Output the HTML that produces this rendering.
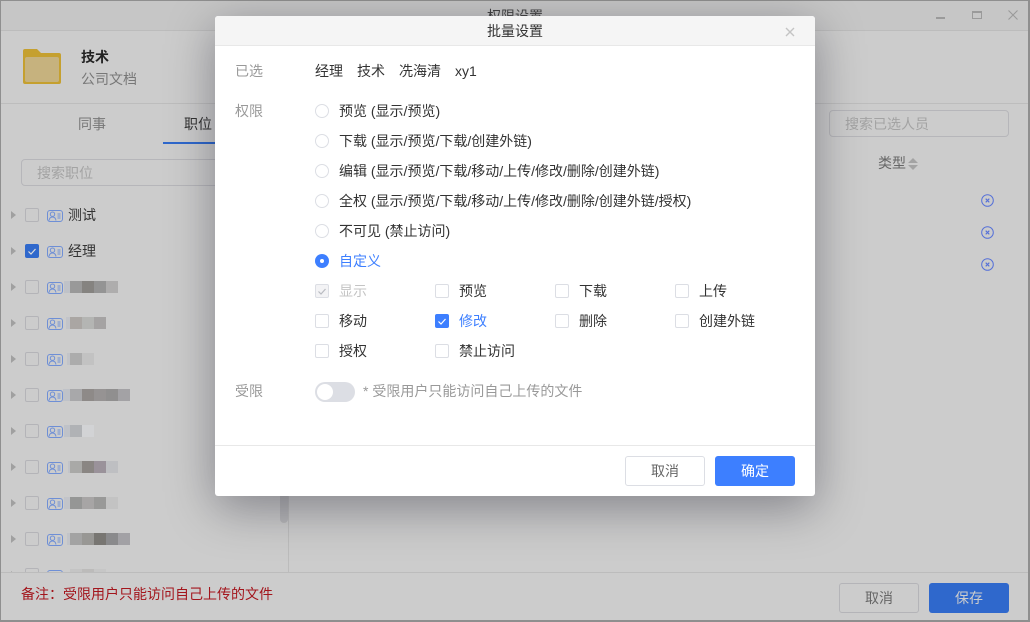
<!DOCTYPE html>
<html lang="zh"><head><meta charset="utf-8"><title>批量设置</title>
<style>
*{box-sizing:border-box}
html,body{margin:0;padding:0;width:1030px;height:622px;overflow:hidden;background:#ccc}
body{position:relative;font:14px/20px "Liberation Sans","Noto Sans CJK SC",sans-serif;color:#333}
.a{position:absolute}
.t{position:absolute;white-space:nowrap;line-height:20px}
.cb{position:absolute;width:14px;height:14px;border:1px solid #b4b4b8;border-radius:2px}
.cb2{position:absolute;width:14px;height:14px;border:1px solid #dcdee4;border-radius:2px;background:#fff}
.tri{position:absolute;left:11px;width:0;height:0;border-left:5px solid #a0a0a0;border-top:4px solid transparent;border-bottom:4px solid transparent}
.card{position:absolute;left:47px;width:16px;height:12px}
.p{position:absolute;height:12px}
.r{position:absolute;left:315px;width:14px;height:14px;border:1px solid #dcdee4;border-radius:50%;background:#fff}
.x{position:absolute;left:981px;width:13px;height:13px}
</style></head>
<body>
<!-- window background -->
<div class="a" style="left:0;top:0;width:1030px;height:31px;background:#c6c6c6;border-bottom:1px solid #bcbcbc"></div>
<div class="t" style="left:487px;top:6px;width:56px;text-align:center;color:#444">权限设置</div>
<div class="a" style="left:0;top:103px;width:1030px;height:1px;background:#bdbdbd"></div>
<svg class="a" style="left:22px;top:48px" width="40" height="38" viewBox="0 0 40 38">
<path d="M1 3a2 2 0 0 1 2-2h12l4 4h18a2 2 0 0 1 2 2v27a2 2 0 0 1-2 2H3a2 2 0 0 1-2-2z" fill="#c5a02f"/>
<rect x="3" y="9" width="34" height="25" rx="2" fill="#c6b27e"/>
</svg>
<div class="t" style="left:81px;top:47px;color:#222;font-weight:bold">技术</div>
<div class="t" style="left:81px;top:69px;color:#777">公司文档</div>
<div class="t" style="left:78px;top:114px;color:#777">同事</div>
<div class="t" style="left:184px;top:114px;color:#333">职位</div>
<div class="a" style="left:163px;top:142px;width:60px;height:2px;background:#2f68cc"></div>
<div class="a" style="left:21px;top:159px;width:220px;height:27px;border:1px solid #b6b6ba;border-radius:4px"></div>
<div class="t" style="left:37px;top:163px;color:#a3a3a3">搜索职位</div>

<!-- list -->
<div class="tri" style="top:211px"></div><div class="cb" style="left:25px;top:208px"></div>
<svg class="card" style="top:210px" viewBox="0 0 16 12"><rect x=".5" y=".5" width="15" height="11" rx="2.500" fill="none" stroke="#6e8fd6"/><circle cx="5.500" cy="4.200" r="2.200" fill="none" stroke="#6e8fd6"/><path d="M2 10.500c.4-2.500 1.800-3.500 3.500-3.500s3.100 1 3.500 3.500M10.500 4h3M10.500 6h3M10.500 8h3" fill="none" stroke="#6e8fd6"/></svg>
<div class="t" style="left:68px;top:205px;color:#333">测试</div>

<div class="tri" style="top:247px"></div>
<div class="a" style="left:25px;top:244px;width:14px;height:14px;background:#2f68cc;border-radius:2px"></div>
<svg class="a" style="left:25px;top:244px" width="14" height="14"><path d="M3.500 7.500l2.500 2.500 4.500-5" fill="none" stroke="#ddd" stroke-width="1.200"/></svg>
<svg class="card" style="top:246px" viewBox="0 0 16 12"><rect x=".5" y=".5" width="15" height="11" rx="2.500" fill="none" stroke="#6e8fd6"/><circle cx="5.500" cy="4.200" r="2.200" fill="none" stroke="#6e8fd6"/><path d="M2 10.500c.4-2.500 1.800-3.500 3.500-3.500s3.100 1 3.500 3.500M10.500 4h3M10.500 6h3M10.500 8h3" fill="none" stroke="#6e8fd6"/></svg>
<div class="t" style="left:68px;top:241px;color:#333">经理</div>

<div class="tri" style="top:283px"></div><div class="cb" style="left:25px;top:280px"></div>
<svg class="card" style="top:282px" viewBox="0 0 16 12"><rect x=".5" y=".5" width="15" height="11" rx="2.500" fill="none" stroke="#6e8fd6"/><circle cx="5.500" cy="4.200" r="2.200" fill="none" stroke="#6e8fd6"/><path d="M2 10.500c.4-2.500 1.800-3.500 3.500-3.500s3.100 1 3.500 3.500M10.500 4h3M10.500 6h3M10.500 8h3" fill="none" stroke="#6e8fd6"/></svg>
<div class="p" style="left:64px;top:281px;width:6px;background:#bfc2c8"></div><div class="p" style="left:70px;top:281px;width:12px;background:#999"></div><div class="p" style="left:82px;top:281px;width:12px;background:#858380"></div><div class="p" style="left:94px;top:281px;width:12px;background:#949494"></div><div class="p" style="left:106px;top:281px;width:12px;background:#aeadad"></div>

<div class="tri" style="top:319px"></div><div class="cb" style="left:25px;top:316px"></div>
<svg class="card" style="top:318px" viewBox="0 0 16 12"><rect x=".5" y=".5" width="15" height="11" rx="2.500" fill="none" stroke="#6e8fd6"/><circle cx="5.500" cy="4.200" r="2.200" fill="none" stroke="#6e8fd6"/><path d="M2 10.500c.4-2.500 1.800-3.500 3.500-3.500s3.100 1 3.500 3.500M10.500 4h3M10.500 6h3M10.500 8h3" fill="none" stroke="#6e8fd6"/></svg>
<div class="p" style="left:66px;top:317px;width:4px;background:#c2c4c9"></div><div class="p" style="left:70px;top:317px;width:12px;background:#aaa6a3"></div><div class="p" style="left:82px;top:317px;width:12px;background:#b4b5b3"></div><div class="p" style="left:94px;top:317px;width:12px;background:#a5a3a3"></div>

<div class="tri" style="top:355px"></div><div class="cb" style="left:25px;top:352px"></div>
<svg class="card" style="top:354px" viewBox="0 0 16 12"><rect x=".5" y=".5" width="15" height="11" rx="2.500" fill="none" stroke="#6e8fd6"/><circle cx="5.500" cy="4.200" r="2.200" fill="none" stroke="#6e8fd6"/><path d="M2 10.500c.4-2.500 1.800-3.500 3.500-3.500s3.100 1 3.500 3.500M10.500 4h3M10.500 6h3M10.500 8h3" fill="none" stroke="#6e8fd6"/></svg>
<div class="p" style="left:67px;top:353px;width:3px;background:#c2c4c9"></div><div class="p" style="left:70px;top:353px;width:12px;background:#acacac"></div><div class="p" style="left:82px;top:353px;width:12px;background:#c2c2c2"></div>

<div class="tri" style="top:391px"></div><div class="cb" style="left:25px;top:388px"></div>
<svg class="card" style="top:390px" viewBox="0 0 16 12"><rect x=".5" y=".5" width="15" height="11" rx="2.500" fill="none" stroke="#6e8fd6"/><circle cx="5.500" cy="4.200" r="2.200" fill="none" stroke="#6e8fd6"/><path d="M2 10.500c.4-2.500 1.800-3.500 3.500-3.500s3.100 1 3.500 3.500M10.500 4h3M10.500 6h3M10.500 8h3" fill="none" stroke="#6e8fd6"/></svg>
<div class="p" style="left:63px;top:389px;width:7px;background:#bfc2c8"></div><div class="p" style="left:70px;top:389px;width:12px;background:#a8a8aa"></div><div class="p" style="left:82px;top:389px;width:12px;background:#8e8a88"></div><div class="p" style="left:94px;top:389px;width:12px;background:#969393"></div><div class="p" style="left:106px;top:389px;width:12px;background:#908f8f"></div><div class="p" style="left:118px;top:389px;width:12px;background:#a3a2a5"></div>

<div class="tri" style="top:427px"></div><div class="cb" style="left:25px;top:424px"></div>
<svg class="card" style="top:426px" viewBox="0 0 16 12"><rect x=".5" y=".5" width="15" height="11" rx="2.500" fill="none" stroke="#6e8fd6"/><circle cx="5.500" cy="4.200" r="2.200" fill="none" stroke="#6e8fd6"/><path d="M2 10.500c.4-2.500 1.800-3.500 3.500-3.500s3.100 1 3.500 3.500M10.500 4h3M10.500 6h3M10.500 8h3" fill="none" stroke="#6e8fd6"/></svg>
<div class="p" style="left:64px;top:425px;width:6px;background:#bfc2c8"></div><div class="p" style="left:70px;top:425px;width:12px;background:#b0b2b5"></div><div class="p" style="left:82px;top:425px;width:12px;background:#d2d3d5"></div>

<div class="tri" style="top:463px"></div><div class="cb" style="left:25px;top:460px"></div>
<svg class="card" style="top:462px" viewBox="0 0 16 12"><rect x=".5" y=".5" width="15" height="11" rx="2.500" fill="none" stroke="#6e8fd6"/><circle cx="5.500" cy="4.200" r="2.200" fill="none" stroke="#6e8fd6"/><path d="M2 10.500c.4-2.500 1.800-3.500 3.500-3.500s3.100 1 3.500 3.500M10.500 4h3M10.500 6h3M10.500 8h3" fill="none" stroke="#6e8fd6"/></svg>
<div class="p" style="left:68px;top:461px;width:2px;background:#c2c4c9"></div><div class="p" style="left:70px;top:461px;width:12px;background:#a9a9a7"></div><div class="p" style="left:82px;top:461px;width:12px;background:#8a8683"></div><div class="p" style="left:94px;top:461px;width:12px;background:#9a929a"></div><div class="p" style="left:106px;top:461px;width:12px;background:#bebfc2"></div>

<div class="tri" style="top:499px"></div><div class="cb" style="left:25px;top:496px"></div>
<svg class="card" style="top:498px" viewBox="0 0 16 12"><rect x=".5" y=".5" width="15" height="11" rx="2.500" fill="none" stroke="#6e8fd6"/><circle cx="5.500" cy="4.200" r="2.200" fill="none" stroke="#6e8fd6"/><path d="M2 10.500c.4-2.500 1.800-3.500 3.500-3.500s3.100 1 3.500 3.500M10.500 4h3M10.500 6h3M10.500 8h3" fill="none" stroke="#6e8fd6"/></svg>
<div class="p" style="left:64px;top:497px;width:6px;background:#c2c4c9"></div><div class="p" style="left:70px;top:497px;width:12px;background:#959695"></div><div class="p" style="left:82px;top:497px;width:12px;background:#a7a5a5"></div><div class="p" style="left:94px;top:497px;width:12px;background:#999998"></div><div class="p" style="left:106px;top:497px;width:12px;background:#c3c3c3"></div>

<div class="tri" style="top:535px"></div><div class="cb" style="left:25px;top:532px"></div>
<svg class="card" style="top:534px" viewBox="0 0 16 12"><rect x=".5" y=".5" width="15" height="11" rx="2.500" fill="none" stroke="#6e8fd6"/><circle cx="5.500" cy="4.200" r="2.200" fill="none" stroke="#6e8fd6"/><path d="M2 10.500c.4-2.500 1.800-3.500 3.500-3.500s3.100 1 3.500 3.500M10.500 4h3M10.500 6h3M10.500 8h3" fill="none" stroke="#6e8fd6"/></svg>
<div class="p" style="left:67px;top:533px;width:3px;background:#c2c4c9"></div><div class="p" style="left:70px;top:533px;width:12px;background:#a3a3a3"></div><div class="p" style="left:82px;top:533px;width:12px;background:#989794"></div><div class="p" style="left:94px;top:533px;width:12px;background:#787672"></div><div class="p" style="left:106px;top:533px;width:12px;background:#8a8a8c"></div><div class="p" style="left:118px;top:533px;width:12px;background:#a2a1a5"></div>

<div class="tri" style="top:571px"></div><div class="cb" style="left:25px;top:568px"></div>
<svg class="card" style="top:570px" viewBox="0 0 16 12"><rect x=".5" y=".5" width="15" height="11" rx="2.500" fill="none" stroke="#6e8fd6"/></svg>
<div class="p" style="left:70px;top:569px;width:12px;background:#c4c4c4"></div><div class="p" style="left:82px;top:569px;width:12px;background:#bcbbba"></div><div class="p" style="left:94px;top:569px;width:12px;background:#c6c6c6"></div>

<!-- scroll and divider -->
<div class="a" style="left:280px;top:440px;width:8px;height:83px;background:#b8b8ba;border-radius:0 0 4px 4px"></div>
<div class="a" style="left:288px;top:104px;width:1px;height:468px;background:#bcbcbc"></div>

<!-- right side -->
<div class="a" style="left:829px;top:110px;width:180px;height:27px;border:1px solid #b6b6ba;border-radius:4px"></div>
<div class="t" style="left:845px;top:114px;color:#a3a3a3">搜索已选人员</div>
<div class="t" style="left:878px;top:153px;color:#666">类型</div>
<div class="a" style="left:908px;top:158px;width:0;height:0;border-left:5px solid transparent;border-right:5px solid transparent;border-bottom:5px solid #a3a3a3"></div>
<div class="a" style="left:908px;top:165px;width:0;height:0;border-left:5px solid transparent;border-right:5px solid transparent;border-top:5px solid #a3a3a3"></div>
<svg class="x" style="top:194px" viewBox="0 0 13 13"><circle cx="6.500" cy="6.500" r="5.800" fill="none" stroke="#5570d8"/><path d="M4.700 4.700l3.600 3.600M8.300 4.700l-3.600 3.600" stroke="#5570d8" stroke-width="1.100"/></svg>
<svg class="x" style="top:226px" viewBox="0 0 13 13"><circle cx="6.500" cy="6.500" r="5.800" fill="none" stroke="#5570d8"/><path d="M4.700 4.700l3.600 3.600M8.300 4.700l-3.600 3.600" stroke="#5570d8" stroke-width="1.100"/></svg>
<svg class="x" style="top:258px" viewBox="0 0 13 13"><circle cx="6.500" cy="6.500" r="5.800" fill="none" stroke="#5570d8"/><path d="M4.700 4.700l3.600 3.600M8.300 4.700l-3.600 3.600" stroke="#5570d8" stroke-width="1.100"/></svg>

<!-- window controls -->
<div class="a" style="left:936px;top:17px;width:9px;height:2px;background:#9a9a9a"></div>
<div class="a" style="left:972px;top:11px;width:10px;height:8px;border:1px solid #9a9a9a;border-top-width:2px"></div>
<svg class="a" style="left:1008px;top:10px" width="10" height="10"><path d="M.5.500l9 9M9.500.500l-9 9" stroke="#9a9a9a" stroke-width="1.100"/></svg>

<!-- footer -->
<div class="a" style="left:0;top:572px;width:1030px;height:50px;background:#ccc;border-top:1px solid #bcbcbc"></div>
<div class="t" style="left:21px;top:584px;font-size:14px;color:#a3151c">备注：受限用户只能访问自己上传的文件</div>
<div class="a" style="left:839px;top:583px;width:80px;height:30px;border:1px solid #b4b4b8;border-radius:3px;text-align:center;line-height:28px;color:#666">取消</div>
<div class="a" style="left:929px;top:583px;width:80px;height:30px;background:#2f68cc;border-radius:3px;text-align:center;line-height:30px;color:#ccc">保存</div>

<div class="a" style="left:0;top:0;width:1030px;height:622px;border:1px solid #8f8f8f;border-bottom-width:2px;border-right-width:2px;pointer-events:none"></div>

<!-- dialog -->
<div class="a" style="left:215px;top:16px;width:600px;height:480px;background:#fff;border-radius:3px;box-shadow:0 12px 48px rgba(0,0,20,.36)"></div>
<div class="a" style="left:215px;top:16px;width:600px;height:30px;background:#f5f5f5;border-bottom:1px solid #e8e8e8;border-radius:3px 3px 0 0"></div>
<div class="t" style="left:215px;top:21px;width:600px;text-align:center;color:#333">批量设置</div>
<svg class="a" style="left:785px;top:27px" width="10" height="10"><path d="M1 1l8 8M9 1l-8 8" stroke="#c4c4c4" stroke-width="1.400"/></svg>

<div class="t" style="left:235px;top:61px;color:#999">已选</div>
<div class="t" style="left:315px;top:61px">经理</div>
<div class="t" style="left:357px;top:61px">技术</div>
<div class="t" style="left:399px;top:61px">冼海清</div>
<div class="t" style="left:455px;top:61px">xy1</div>
<div class="t" style="left:235px;top:101px;color:#999">权限</div>

<div class="r" style="top:104px"></div><div class="t" style="left:339px;top:101px">预览 (显示/预览)</div>
<div class="r" style="top:134px"></div><div class="t" style="left:339px;top:131px">下载 (显示/预览/下载/创建外链)</div>
<div class="r" style="top:164px"></div><div class="t" style="left:339px;top:161px">编辑 (显示/预览/下载/移动/上传/修改/删除/创建外链)</div>
<div class="r" style="top:194px"></div><div class="t" style="left:339px;top:191px">全权 (显示/预览/下载/移动/上传/修改/删除/创建外链/授权)</div>
<div class="r" style="top:224px"></div><div class="t" style="left:339px;top:221px">不可见 (禁止访问)</div>
<div class="a" style="left:315px;top:254px;width:14px;height:14px;border-radius:50%;background:#3d7fff"></div>
<div class="a" style="left:320px;top:259px;width:4px;height:4px;border-radius:50%;background:#fff"></div>
<div class="t" style="left:339px;top:251px;color:#3d7fff">自定义</div>

<div class="cb2" style="left:315px;top:284px;background:#f3f3f5"></div>
<svg class="a" style="left:315px;top:284px" width="14" height="14"><path d="M3.500 7.500l2.500 2.500 4.500-5" fill="none" stroke="#b8bac0" stroke-width="1.200"/></svg>
<div class="t" style="left:339px;top:281px;color:#c4c4c4">显示</div>
<div class="cb2" style="left:435px;top:284px"></div><div class="t" style="left:459px;top:281px">预览</div>
<div class="cb2" style="left:555px;top:284px"></div><div class="t" style="left:579px;top:281px">下载</div>
<div class="cb2" style="left:675px;top:284px"></div><div class="t" style="left:699px;top:281px">上传</div>

<div class="cb2" style="left:315px;top:314px"></div><div class="t" style="left:339px;top:311px">移动</div>
<div class="a" style="left:435px;top:314px;width:14px;height:14px;border-radius:2px;background:#3d7fff"></div>
<svg class="a" style="left:435px;top:314px" width="14" height="14"><path d="M3.500 7.500l2.500 2.500 4.500-5" fill="none" stroke="#fff" stroke-width="1.200"/></svg>
<div class="t" style="left:459px;top:311px;color:#3d7fff">修改</div>
<div class="cb2" style="left:555px;top:314px"></div><div class="t" style="left:579px;top:311px">删除</div>
<div class="cb2" style="left:675px;top:314px"></div><div class="t" style="left:699px;top:311px">创建外链</div>

<div class="cb2" style="left:315px;top:344px"></div><div class="t" style="left:339px;top:341px">授权</div>
<div class="cb2" style="left:435px;top:344px"></div><div class="t" style="left:459px;top:341px">禁止访问</div>

<div class="t" style="left:235px;top:381px;color:#999">受限</div>
<div class="a" style="left:315px;top:382px;width:40px;height:20px;border-radius:10px;background:#dcdee4"></div>
<div class="a" style="left:317px;top:384px;width:16px;height:16px;border-radius:50%;background:#fff"></div>
<div class="t" style="left:363px;top:381px;color:#999">* 受限用户只能访问自己上传的文件</div>

<div class="a" style="left:215px;top:445px;width:600px;height:1px;background:#e8e8e8"></div>
<div class="a" style="left:625px;top:456px;width:80px;height:30px;border:1px solid #dcdee4;border-radius:3px;background:#fff;text-align:center;line-height:28px;color:#666">取消</div>
<div class="a" style="left:715px;top:456px;width:80px;height:30px;border-radius:3px;background:#3d7fff;text-align:center;line-height:30px;color:#fff">确定</div>
</body></html>
